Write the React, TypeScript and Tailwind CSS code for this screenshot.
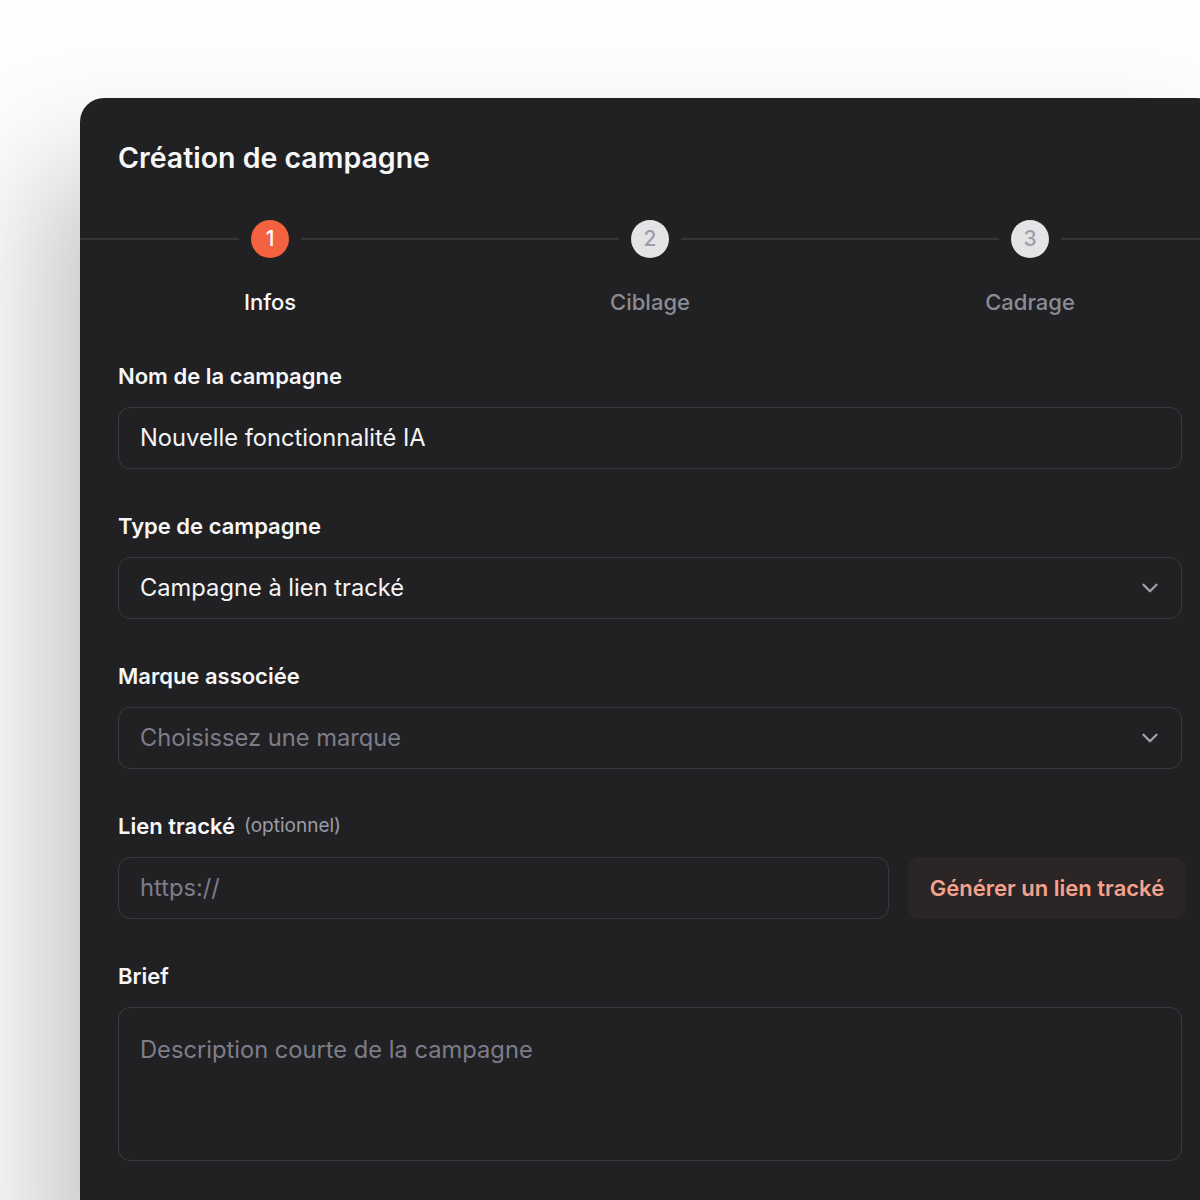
import { ChevronDown } from "lucide-react";

const font = { fontFamily: "Inter, 'Noto Sans', sans-serif" };

const steps = [
  { n: 1, label: "Infos", active: true },
  { n: 2, label: "Ciblage", active: false },
  { n: 3, label: "Cadrage", active: false },
];

function Label({ text, hint }: { text: string; hint?: string }) {
  return (
    <div className="flex h-[28px] items-center gap-[9px]">
      <span className="text-[22px] font-semibold leading-[28px] text-[#f7f7f8]">{text}</span>
      {hint && <span className="text-[19px] leading-[28px] text-[#9b9ba6]">{hint}</span>}
    </div>
  );
}

function Field({ value, placeholder, select }: { value?: string; placeholder?: string; select?: boolean }) {
  return (
    <div className="flex h-[62px] items-center justify-between rounded-[12px] border border-[#3a3a3e] pl-[21px] pr-[18px]">
      <span className={"text-[23.7px] " + (value ? "text-[#f4f4f5]" : "text-[#7d7d8a]")}>
        {value ?? placeholder}
      </span>
      {select && <ChevronDown size={26} strokeWidth={2.2} className="text-[#a1a1aa]" />}
    </div>
  );
}

export default function App() {
  return (
    <div className="h-[1200px] w-[1200px] overflow-hidden bg-[#fdfdfd] pl-[80px] pt-[98px]" style={font}>
      <div className="h-[1150px] w-[1140px] rounded-[24px] bg-[#212123] shadow-[-40px_70px_120px_rgba(0,0,0,0.22)]">
        <h1 className="pl-[38px] pt-[43px] text-[28.5px] font-semibold leading-[34px] text-[#f7f7f8]">
          Création de campagne
        </h1>

        <div className="relative mt-[45px]">
          <div className="absolute left-0 right-0 top-[18px] h-[2px] bg-[#353538]" />
          <div className="relative grid grid-cols-3">
            {steps.map((s) => (
              <div key={s.n} className="flex flex-col items-center">
                <div className="bg-[#212123] px-[12px]">
                  <div
                    className={
                      "flex h-[38px] w-[38px] items-center justify-center rounded-full text-[21px] font-medium " +
                      (s.active ? "bg-[#f4623f] text-white" : "bg-[#e4e4e7] text-[#9d9da8]")
                    }
                  >
                    {s.n}
                  </div>
                </div>
                <div
                  className={
                    "mt-[30px] text-[22px] font-medium leading-[28px] " +
                    (s.active ? "text-[#f7f7f8]" : "text-[#8b8b98]")
                  }
                >
                  {s.label}
                </div>
              </div>
            ))}
          </div>
        </div>

        <div className="mt-[46px] flex w-[1102px] flex-col gap-[43px] pl-[38px]">
          <div className="flex flex-col gap-[17px]">
            <Label text="Nom de la campagne" />
            <Field value="Nouvelle fonctionnalité IA" />
          </div>
          <div className="flex flex-col gap-[17px]">
            <Label text="Type de campagne" />
            <Field value="Campagne à lien tracké" select />
          </div>
          <div className="flex flex-col gap-[17px]">
            <Label text="Marque associée" />
            <Field placeholder="Choisissez une marque" select />
          </div>
          <div className="flex flex-col gap-[17px]">
            <Label text="Lien tracké" hint="(optionnel)" />
            <div className="flex gap-[19px]">
              <div className="w-[771px] shrink-0">
                <Field placeholder="https://" />
              </div>
              <button className="flex h-[62px] w-[278px] shrink-0 items-center justify-center rounded-[12px] bg-[#2b2625] text-[22px] font-semibold text-[#f4a28d]">
                Générer un lien tracké
              </button>
            </div>
          </div>
          <div className="flex flex-col gap-[17px]">
            <Label text="Brief" />
            <div className="h-[154px] rounded-[12px] border border-[#3a3a3e] px-[21px] pt-[27px] text-[23.7px] leading-[30px] text-[#7d7d8a]">
              Description courte de la campagne
            </div>
          </div>
        </div>
      </div>
    </div>
  );
}
